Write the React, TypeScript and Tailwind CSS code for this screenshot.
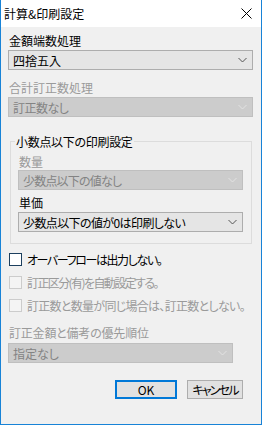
import React from "react";

const Chevron = ({ color }: { color: string }) => (
  <svg width="9" height="6" viewBox="0 0 9 6" className="shrink-0">
    <polyline points="0.5,1 4.5,5 8.5,1" fill="none" stroke={color} strokeWidth="1" />
  </svg>
);

function Combo({ text, disabled, wide, track }: { text: string; disabled?: boolean; wide?: "full" | "inner"; track?: string }) {
  const width = wide === "full" ? "w-[245px]" : "w-[225px]";
  if (disabled) {
    return (
      <div className={`${width} h-[20px] border border-[#bfbfbf] bg-[#cccccc] text-[#838383] flex items-center justify-between pl-[4px] pr-[5px]`}>
        <span className={track}>{text}</span>
        <Chevron color="#e2e2e2" />
      </div>
    );
  }
  return (
    <div className={`${width} h-[20px] border border-[#adadad] bg-[#e5e5e5] text-black flex items-center justify-between pl-[4px] pr-[5px]`}>
      <span className={track}>{text}</span>
      <Chevron color="#555555" />
    </div>
  );
}

function Check({ text, disabled, track }: { text: string; disabled?: boolean; track: string }) {
  return (
    <div className="flex items-center h-[15px]">
      {disabled ? (
        <div className="w-[13px] h-[13px] border border-[#cccccc] bg-[#f4f4f4]" />
      ) : (
        <div className="w-[13px] h-[13px] border border-[#1c3f5e] bg-white" />
      )}
      <span className={`ml-[5px] whitespace-nowrap ${track} ${disabled ? "text-[#9a9a9a]" : "text-black"}`}>{text}</span>
    </div>
  );
}

export default function App() {
  return (
    <div className="w-[262px] h-[425px] border-x border-b border-[#1883d7] bg-[#f0f0f0] flex flex-col text-[12px] leading-[15px] text-black font-['Noto_Sans_CJK_JP',sans-serif] [font-feature-settings:'palt']">
      <div className="h-[27px] bg-white flex items-center justify-between pl-[3px] pr-[9px] shrink-0">
        <span>計算&amp;印刷設定</span>
        <svg width="11" height="11" viewBox="0 0 11 11">
          <path d="M0.5 0.5 L10.5 10.5 M10.5 0.5 L0.5 10.5" stroke="#000" strokeWidth="1" />
        </svg>
      </div>
      <div className="flex flex-col pl-[7px] pt-[6px]">
        <div className="pl-[1px]">金額端数処理</div>
        <div className="mt-[2px]">
          <Combo text="四捨五入" wide="full" />
        </div>
        <div className="mt-[10px] pl-[1px] text-[#9a9a9a]">合計訂正数処理</div>
        <div className="mt-[2px]">
          <Combo text="訂正数なし" wide="full" disabled track="tracking-[-0.5px]" />
        </div>
        <fieldset className="mt-[17px] ml-[2px] w-[242px] border border-[#dcdcdc] px-[7px] pt-[5px] pb-[11px]">
          <legend className="ml-[-3px] px-[1px] tracking-[-0.3px]">小数点以下の印刷設定</legend>
          <div className="pl-[1px] text-[#9a9a9a]">数量</div>
          <div className="mt-[1px]">
            <Combo text="少数点以下の値なし" disabled track="tracking-[-0.8px]" />
          </div>
          <div className="mt-[5px] pl-[1px]">単価</div>
          <div className="mt-[2px]">
            <Combo text="少数点以下の値が0は印刷しない" track="tracking-[-0.6px]" />
          </div>
        </fieldset>
        <div className="mt-[8px] flex flex-col gap-[8px] pl-[1px]">
          <Check text="オーバーフローは出力しない。" track="tracking-[-1.4px]" />
          <Check text="訂正区分(有)を自動設定する。" disabled track="tracking-[-1.6px]" />
          <Check text="訂正数と数量が同じ場合は、訂正数としない。" disabled track="tracking-[-0.7px]" />
        </div>
        <div className="mt-[12px] pl-[1px] text-[#9a9a9a] tracking-[-0.2px]">訂正金額と備考の優先順位</div>
        <div className="mt-[3px]">
          <Combo text="指定なし" disabled />
        </div>
        <div className="mt-[17px] flex justify-end pr-[18px] gap-[10px]">
          <button className="w-[62px] h-[19px] border-2 border-[#0078d7] bg-[#e1e1e1] flex items-center justify-center">OK</button>
          <button className="w-[56px] h-[19px] border border-[#adadad] bg-[#e1e1e1] flex items-center justify-center whitespace-nowrap tracking-[-1.8px]">キャンセル</button>
        </div>
      </div>
    </div>
  );
}
